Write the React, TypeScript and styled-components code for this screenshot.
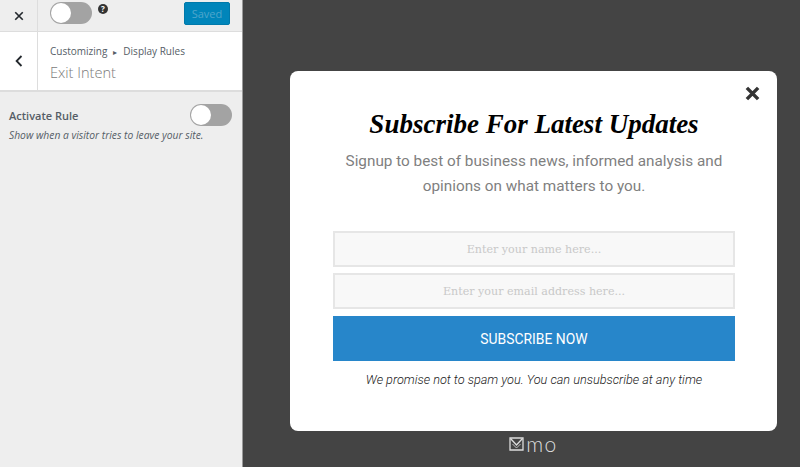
import styled, { createGlobalStyle } from "styled-components";

const GlobalStyle = createGlobalStyle`
  html, body {
    margin: 0;
    padding: 0;
    height: 100%;
    overflow: hidden;
  }
  body {
    font-family: "Open Sans", sans-serif;
  }
`;

const Page = styled.div`
  display: flex;
  width: 800px;
  height: 467px;
`;

const Sidebar = styled.aside`
  width: 243px;
  flex: none;
  box-sizing: border-box;
  background: #eeeeee;
  border-right: 1px solid #9a9a9a;
`;

const TopBar = styled.div`
  display: flex;
  align-items: stretch;
  height: 32px;
  box-sizing: border-box;
  border-bottom: 1px solid #dddddd;
`;

const IconCell = styled.div`
  width: 38px;
  flex: none;
  box-sizing: border-box;
  display: flex;
  align-items: center;
  justify-content: center;
  border-right: 1px solid #dddddd;
  color: #23282d;
`;

const TopControls = styled.div`
  flex: 1;
  display: flex;
  align-items: flex-start;
  padding: 2px 12px 0 12px;
`;

const Toggle = styled.span`
  display: block;
  flex: none;
  position: relative;
  width: 42px;
  height: 22px;
  box-sizing: border-box;
  border-radius: 11px;
  background: #a3a3a3;

  &::before {
    content: "";
    position: absolute;
    left: 1px;
    top: 1px;
    width: 20px;
    height: 20px;
    border-radius: 50%;
    background: #ffffff;
  }
`;

const HelpIcon = styled.span`
  display: flex;
  flex: none;
  margin: 2px 0 0 6px;
  width: 10px;
  height: 10px;
  border-radius: 50%;
  background: #333333;
  color: #ffffff;
  font-size: 8px;
  font-weight: 700;
  line-height: 10px;
  justify-content: center;
`;

const SavedButton = styled.button`
  margin-left: auto;
  width: 46px;
  height: 23px;
  padding: 0;
  border: 1px solid #0079aa;
  border-radius: 2px;
  background: #0085ba;
  color: #4fa6cc;
  font-family: "Open Sans", sans-serif;
  font-size: 11px;
`;

const SectionHeader = styled.div`
  display: flex;
  height: 60px;
  box-sizing: border-box;
  background: #ffffff;
  border-bottom: 2px solid #dddddd;
`;

const HeaderText = styled.div`
  padding: 12px 0 0 12px;
`;

const Breadcrumb = styled.div`
  font-size: 10px;
  line-height: 14px;
  color: #555d66;
`;

const Arrow = styled.span`
  font-size: 8px;
  margin: 0 6px;
`;

const SectionTitle = styled.div`
  margin-top: 3px;
  font-size: 14.6px;
  line-height: 20px;
  font-weight: 300;
  color: #7b7b7b;
`;

const RuleBlock = styled.div`
  padding: 12px 10px 0 9px;
`;

const RuleRow = styled.div`
  display: flex;
  align-items: center;
  justify-content: space-between;
  height: 22px;
`;

const RuleLabel = styled.span`
  font-size: 11px;
  font-weight: 600;
  color: #555d66;
`;

const RuleHint = styled.div`
  margin-top: 2px;
  font-size: 10.3px;
  line-height: 14px;
  font-style: italic;
  color: #555d66;
`;

const Stage = styled.main`
  flex: 1;
  background: #444444;
  padding: 71px 23px 0 47px;
  display: flex;
  flex-direction: column;
  align-items: center;
`;

const Modal = styled.section`
  position: relative;
  width: 487px;
  height: 360px;
  box-sizing: border-box;
  flex: none;
  padding: 33px 42px 0 43px;
  background: #ffffff;
  border-radius: 8px;
  text-align: center;
`;

const CloseButton = styled.span`
  position: absolute;
  top: 15px;
  right: 17px;
  display: flex;
  color: #333333;
`;

const ModalTitle = styled.h1`
  margin: 0;
  font-family: "Liberation Serif", serif;
  font-style: italic;
  font-weight: 700;
  font-size: 27px;
  line-height: 40px;
  color: #000000;
`;

const ModalIntro = styled.p`
  margin: 5px 0 0;
  font-family: "Roboto", sans-serif;
  font-weight: 400;
  font-size: 15.3px;
  line-height: 25px;
  color: #7f7f7f;
`;

const SignupForm = styled.form`
  display: flex;
  flex-direction: column;
  gap: 6px;
  margin-top: 32px;
`;

const TextField = styled.input`
  width: 100%;
  height: 36px;
  box-sizing: border-box;
  border: 2px solid #e6e6e6;
  background: #f8f8f8;
  text-align: center;
  font-family: "DejaVu Serif", serif;
  font-size: 11.1px;

  &::placeholder {
    color: #c8c8c8;
    opacity: 1;
  }
`;

const SubmitButton = styled.button`
  height: 45px;
  margin-top: 1px;
  padding: 0;
  border: none;
  background: #2786ca;
  color: #ffffff;
  font-family: "Roboto", sans-serif;
  font-size: 13.9px;
`;

const Disclaimer = styled.p`
  margin: 11px 0 0;
  font-size: 12.7px;
  line-height: 16px;
  font-style: italic;
  font-weight: 300;
  font-family: "Roboto", sans-serif;
  color: #222222;
`;

const Brand = styled.div`
  display: flex;
  align-items: center;
  gap: 2px;
  margin-top: 3px;
  color: #dcdcdc;
  font-family: "Lato", sans-serif;
  font-weight: 300;
  font-size: 21px;
  line-height: 20px;
  letter-spacing: 1.5px;
`;

const CloseIcon = ({ size, weight }: { size: number; weight: number }) => (
  <svg width={size} height={size} viewBox="0 0 12 12" fill="none" stroke="currentColor" strokeWidth={weight}>
    <path d="M1.5 1.5 10.5 10.5M10.5 1.5 1.5 10.5" />
  </svg>
);

const App = () => {
  return (
    <Page>
      <GlobalStyle />
      <Sidebar>
        <TopBar>
          <IconCell>
            <CloseIcon size={10} weight={2} />
          </IconCell>
          <TopControls>
            <Toggle />
            <HelpIcon>?</HelpIcon>
            <SavedButton type="button">Saved</SavedButton>
          </TopControls>
        </TopBar>
        <SectionHeader>
          <IconCell>
            <svg width="8" height="12" viewBox="0 0 8 12" fill="none" stroke="#23282d" strokeWidth="1.8">
              <path d="M6.5 1 1.6 6l4.9 5" />
            </svg>
          </IconCell>
          <HeaderText>
            <Breadcrumb>
              Customizing<Arrow>▸</Arrow>Display Rules
            </Breadcrumb>
            <SectionTitle>Exit Intent</SectionTitle>
          </HeaderText>
        </SectionHeader>
        <RuleBlock>
          <RuleRow>
            <RuleLabel>Activate Rule</RuleLabel>
            <Toggle />
          </RuleRow>
          <RuleHint>Show when a visitor tries to leave your site.</RuleHint>
        </RuleBlock>
      </Sidebar>
      <Stage>
        <Modal>
          <CloseButton>
            <CloseIcon size={15} weight={2.8} />
          </CloseButton>
          <ModalTitle>Subscribe For Latest Updates</ModalTitle>
          <ModalIntro>
            Signup to best of business news, informed analysis and
            <br />
            opinions on what matters to you.
          </ModalIntro>
          <SignupForm>
            <TextField placeholder="Enter your name here..." />
            <TextField placeholder="Enter your email address here..." />
            <SubmitButton type="button">SUBSCRIBE NOW</SubmitButton>
          </SignupForm>
          <Disclaimer>We promise not to spam you. You can unsubscribe at any time</Disclaimer>
        </Modal>
        <Brand>
          <svg width="15" height="14" viewBox="0 0 15 14" fill="none" stroke="currentColor" strokeWidth="1.3">
            <path d="M1 1h13v12H1z" />
            <path d="M1.5 1.5 7.5 8l6-6.5" />
            <path d="M3.5 7 7.5 11l4-4" strokeWidth="0.8" />
          </svg>
          mo
        </Brand>
      </Stage>
    </Page>
  );
};

export default App;
